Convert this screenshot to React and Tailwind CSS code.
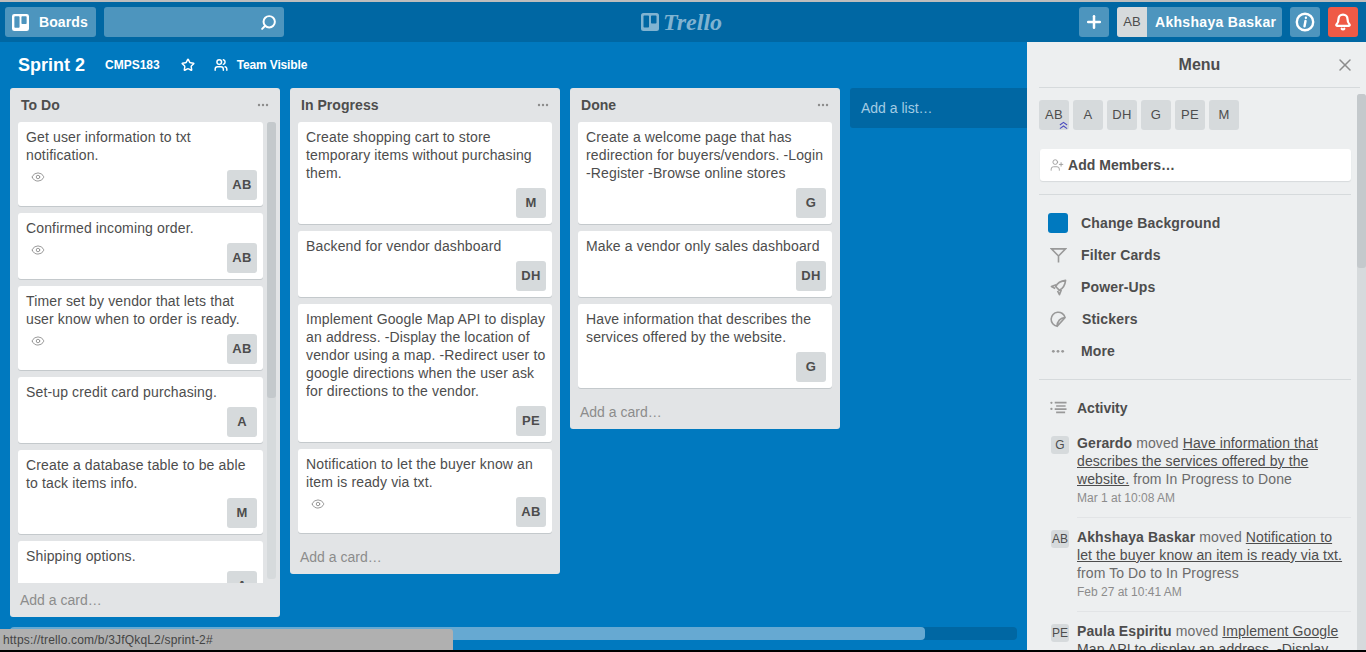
import React from 'react';
import { Bell, Eye, Plus, Search, Star, UserPlus, Users, X } from 'lucide-react';

const todo = [
  { text: 'Get user information to txt notification.', member: 'AB', eye: true },
  { text: 'Confirmed incoming order.', member: 'AB', eye: true },
  { text: 'Timer set by vendor that lets that user know when to order is ready.', member: 'AB', eye: true },
  { text: 'Set-up credit card purchasing.', member: 'A' },
  { text: 'Create a database table to be able to tack items info.', member: 'M' },
  { text: 'Shipping options.', member: 'A' },
];

const inProgress = [
  { text: 'Create shopping cart to store temporary items without purchasing them.', member: 'M' },
  { text: 'Backend for vendor dashboard', member: 'DH' },
  { text: 'Implement Google Map API to display an address. -Display the location of vendor using a map. -Redirect user to google directions when the user ask for directions to the vendor.', member: 'PE' },
  { text: 'Notification to let the buyer know an item is ready via txt.', member: 'AB', eye: true },
];

const done = [
  { text: 'Create a welcome page that has redirection for buyers/vendors. -Login -Register -Browse online stores', member: 'G' },
  { text: 'Make a vendor only sales dashboard', member: 'DH' },
  { text: 'Have information that describes the services offered by the website.', member: 'G' },
];

const BoardMark = ({ className }) => (
  <svg viewBox="0 0 18 18" className={className} fill="currentColor">
    <path fillRule="evenodd" d="M2.5 0h13A2.5 2.5 0 0 1 18 2.5v13a2.5 2.5 0 0 1-2.5 2.5h-13A2.5 2.5 0 0 1 0 15.500v-13A2.500 2.500 0 0 1 2.500 0zM3.300 2.500a.8.8 0 0 0-.8.8v10.400a.8.8 0 0 0 .8.8h3.900a.8.8 0 0 0 .8-.8V3.300a.8.8 0 0 0-.8-.8zm7.500 0a.8.8 0 0 0-.8.8v6.400a.8.8 0 0 0 .8.8h3.900a.8.800 0 0 0 .8-.8V3.300a.8.8 0 0 0-.8-.8z" />
  </svg>
);

const Dots = ({ className }) => (
  <svg viewBox="0 0 12 4" className={className} fill="currentColor">
    <circle cx="2" cy="2" r="1.200" />
    <circle cx="6" cy="2" r="1.200" />
    <circle cx="10" cy="2" r="1.200" />
  </svg>
);

const Card = ({ text, member, eye }) => (
  <div className="mb-[7px] shrink-0 rounded-[3px] bg-white pt-1.5 pr-1.5 pb-1.5 pl-2 shadow-[0_1px_0_#c4c9cc]">
    <p className="text-sm leading-[18px] tracking-[0.14px] text-[#4d4d4d]">{text}</p>
    <div className="mt-1.5 flex items-start justify-between">
      {eye ? <Eye size={14} strokeWidth={1.500} className="ml-[5px] text-[#8c8c8c]" /> : <span />}
      <span className="flex h-[30px] w-[30px] items-center justify-center rounded-[3px] bg-[#d6dadc] text-[13px] font-bold tracking-[0.3px] text-[#4d4d4d]">
        {member}
      </span>
    </div>
  </div>
);

const ListHeader = ({ title }) => (
  <div className="flex h-[34px] items-center justify-between px-[11px]">
    <h2 className="text-sm font-bold tracking-[0.05px] text-[#4d4d4d]">{title}</h2>
    <Dots className="w-[12px] text-[#8c8c8c]" />
  </div>
);

const AddCard = () => <div className="flex h-[34px] items-center pl-2.5 text-sm text-[#8c8c8c]">Add a card…</div>;

const List = ({ title, cards }) => (
  <section className="w-[270px] shrink-0 rounded-[3px] bg-[#e2e4e6]">
    <ListHeader title={title} />
    <div className="flex flex-col px-2">
      {cards.map((c) => (
        <Card key={c.text} {...c} />
      ))}
    </div>
    <AddCard />
  </section>
);

const TodoList = () => (
  <section className="h-[529px] w-[270px] shrink-0 rounded-[3px] bg-[#e2e4e6]">
    <ListHeader title="To Do" />
    <div className="flex h-[461px] pl-2">
      <div className="flex w-[245px] flex-col overflow-hidden">
        {todo.map((c) => (
          <Card key={c.text} {...c} />
        ))}
      </div>
      <div className="ml-1 h-[457px] w-[9px] rounded-[3px] bg-[#d6dadc]">
        <div className="h-[276px] rounded-[3px] bg-[#c4c9cc]" />
      </div>
    </div>
    <AddCard />
  </section>
);

const HeaderButton = ({ className = 'bg-[#4d95be]', children }) => (
  <button className={`flex h-[30px] w-[30px] items-center justify-center rounded-[3px] text-white ${className}`}>{children}</button>
);

const Header = () => (
  <header className="flex h-10 shrink-0 items-center bg-[#0067a3] pr-2 pl-[5px]">
    <div className="flex flex-1 items-center gap-2">
      <button className="flex h-[30px] w-[91px] items-center gap-2.5 rounded-[3px] bg-[#4d95be] pl-[7px] text-sm font-bold tracking-[0.1px] text-white">
        <BoardMark className="h-[17px] w-[17px]" />
        Boards
      </button>
      <div className="flex h-[30px] w-[180px] items-center justify-end rounded-[3px] bg-[#4d95be] pr-[7px] text-white">
        <Search size={17} strokeWidth={2.800} className="-scale-x-100" />
      </div>
    </div>
    <div className="flex items-center gap-1 text-[#80b3d1]">
      <BoardMark className="h-[18px] w-[18px]" />
      <span className="font-['Liberation_Serif',serif] text-2xl leading-none font-bold italic">Trello</span>
    </div>
    <div className="flex flex-1 items-center justify-end gap-2">
      <HeaderButton>
        <Plus size={20} strokeWidth={3} />
      </HeaderButton>
      <button className="flex h-[30px] w-[165px] items-center rounded-[3px] bg-[#4d95be] text-sm font-bold tracking-[0.3px] text-white">
        <span className="flex h-[30px] w-[30px] items-center justify-center rounded-l-[3px] bg-[#d6dadc] text-[13px] font-normal tracking-normal text-[#4d4d4d]">AB</span>
        <span className="pl-2">Akhshaya Baskar</span>
      </button>
      <HeaderButton>
        <svg viewBox="0 0 20 20" className="h-5 w-5" fill="none" stroke="currentColor" strokeWidth="2.400" strokeLinecap="round">
          <circle cx="10" cy="10" r="8.200" />
          <path d="M10.900 5.800v.01M10.500 9l-1 5.200" />
        </svg>
      </HeaderButton>
      <HeaderButton className="bg-[#ef5a46]">
        <Bell size={18} strokeWidth={3} />
      </HeaderButton>
    </div>
  </header>
);

const MenuItem = ({ icon, label, labelClass = '' }) => (
  <div className="flex h-8 items-center">
    <span className="mr-1 flex w-[38px] justify-center text-[#999]">{icon}</span>
    <span className={`text-sm font-bold tracking-[0.15px] text-[#4d4d4d] ${labelClass}`}>{label}</span>
  </div>
);

const Activity = ({ initials, name, before, link, after, date, last }) => (
  <div className="flex pl-3">
    <span className="mt-[2px] flex h-[18px] w-[18px] shrink-0 items-center justify-center rounded-[3px] bg-[#d6dadc] text-xs text-[#4d4d4d]">
      {initials}
    </span>
    <div className={`ml-2 flex-1 pb-2.5 text-sm leading-[18px] tracking-[0.1px] text-[#6b6b6b] ${last ? '' : 'mb-2.5 border-b border-[#e2e4e6]'}`}>
      <p>
        <b className="font-bold text-[#4d4d4d]">{name}</b> {before} <u className="text-[#4d4d4d]">{link}</u> {after}
      </p>
      <p className="mt-[1px] text-xs leading-[18px] tracking-normal text-[#8c8c8c]">{date}</p>
    </div>
  </div>
);

const Sidebar = () => (
  <aside className="flex w-[339px] shrink-0 flex-col bg-[#edeff0]">
    <div className="relative mr-1.5 ml-3 flex h-[46px] shrink-0 items-center justify-center border-b border-[#d6dadc]">
      <h2 className="text-base font-bold text-[#4d4d4d]">Menu</h2>
      <X size={20} strokeWidth={1.800} className="absolute right-[5px] text-[#8c8c8c]" />
    </div>
    <div className="flex min-h-0 flex-1">
      <div className="flex min-w-0 flex-1 flex-col overflow-hidden pr-1.5 pl-3">
        <div className="flex shrink-0 flex-col border-b border-[#d6dadc] pb-[13px]">
          <div className="mt-3 flex gap-1">
            {['AB', 'A', 'DH', 'G', 'PE', 'M'].map((m, i) => (
              <span key={m} className="relative flex h-[30px] w-[30px] items-center justify-center rounded-[3px] bg-[#d6dadc] text-[13px] tracking-[0.3px] text-[#4d4d4d]">
                {m}
                {i === 0 && (
                  <svg viewBox="0 0 10 9" className="absolute right-[1px] bottom-0 h-[9px] w-[9px] text-[#4c4cc0]" fill="none" stroke="currentColor" strokeWidth="1.200">
                    <path d="M1 4l4-3 4 3M1 8l4-3 4 3" />
                  </svg>
                )}
              </span>
            ))}
          </div>
          <button className="mt-[19px] ml-[1px] flex h-8 items-center rounded-[3px] bg-white pl-[10px] text-sm font-bold tracking-[0.05px] text-[#4d4d4d] shadow-[0_1px_1px_#d6dadc]">
            <UserPlus size={14} strokeWidth={1.500} className="mr-1 text-[#999]" />
            Add Members…
          </button>
        </div>
        <nav className="shrink-0 border-b border-[#d6dadc] py-3">
          <MenuItem icon={<span className="h-5 w-5 rounded-[3px] bg-[#0079bf]" />} label="Change Background" />
          <MenuItem
            icon={
              <svg viewBox="0 0 18 18" className="h-[17px] w-[17px]" fill="none" stroke="currentColor" strokeWidth="1.700">
                <path d="M1.500 2h15L9 9.500zM9 9.500V16.500" />
              </svg>
            }
            label="Filter Cards"
          />
          <MenuItem
            icon={
              <svg viewBox="0 0 18 18" className="h-[17px] w-[17px]" fill="none" stroke="currentColor" strokeWidth="1.700" strokeLinejoin="round">
                <path d="M16.500 1.500C12 2 8 4 6 8l4 4c4-2 6-6 6.500-10.500zM6.500 6L1.500 8l4 2M12 11.500L10 16.500l-2-4" />
              </svg>
            }
            label="Power-Ups"
          />
          <MenuItem
            icon={
              <svg viewBox="0 0 18 18" className="h-[17px] w-[17px]" fill="none" stroke="currentColor" strokeWidth="1.700">
                <path d="M16 7A7.500 7.500 0 1 0 7.500 16.200L16 7zM7.500 16.200C7.500 11 11 7 16 7" />
              </svg>
            }
            label="Stickers"
            labelClass="pl-[1px]"
          />
          <MenuItem icon={<Dots className="w-[14px]" />} label="More" />
        </nav>
        <div className="flex h-[55px] shrink-0 items-center pl-[11px]">
          <svg viewBox="0 0 18 16" className="mr-[10px] h-4 w-[17px] text-[#999]" fill="currentColor">
            <circle cx="1.500" cy="2.500" r="1.200" />
            <circle cx="1.500" cy="9" r="1.200" />
            <path d="M5 1.500h12.500v1.800H5zM6.500 5h10v1.800h-10zM5 8.200h12.500V10H5zM6.500 11.800h9.500v1.800H6.500z" />
          </svg>
          <span className="text-sm font-bold text-[#4d4d4d]">Activity</span>
        </div>
        <div className="-mt-px min-h-0">
          <Activity initials="G" name="Gerardo" before="moved" link="Have information that describes the services offered by the website." after="from In Progress to Done" date="Mar 1 at 10:08 AM" />
          <Activity initials="AB" name="Akhshaya Baskar" before="moved" link="Notification to let the buyer know an item is ready via txt." after="from To Do to In Progress" date="Feb 27 at 10:41 AM" />
          <Activity initials="PE" name="Paula Espiritu" before="moved" link="Implement Google Map API to display an address. -Display" after="" date="Feb 27 at 10:20 AM" last />
        </div>
      </div>
      <div className="mt-1.5 w-[9px] shrink-0 rounded-t-[3px] bg-[#d6dadc]">
        <div className="h-[174px] rounded-[3px] bg-[#c4c9cc]" />
      </div>
    </div>
  </aside>
);

const App = () => (
  <div className="relative flex h-[652px] w-[1366px] flex-col overflow-hidden bg-[#0079bf] font-['Liberation_Sans',Arial,sans-serif]">
    <div className="h-[2px] shrink-0 bg-[#bdbdbd]" />
    <Header />
    <main className="flex min-h-0 flex-1">
      <div className="flex min-w-0 flex-1 flex-col">
        <div className="flex h-[46px] shrink-0 items-center pl-[18px] text-white">
          <h1 className="text-lg font-bold">Sprint 2</h1>
          <span className="ml-5 text-xs font-bold">CMPS183</span>
          <Star size={14} strokeWidth={2.500} className="ml-[21px]" />
          <Users size={14} strokeWidth={2.500} className="ml-[19px]" />
          <span className="ml-[9px] text-xs font-bold tracking-[-0.15px]">Team Visible</span>
        </div>
        <div className="flex min-h-0 flex-1 items-start gap-2.5 pl-2.5">
          <TodoList />
          <List title="In Progress" cards={inProgress} />
          <List title="Done" cards={done} />
          <div className="flex h-10 flex-1 items-center rounded-l-[3px] bg-[#0067a3] pl-[11px] text-sm text-[#a3cce3]">Add a list…</div>
        </div>
        <div className="mx-2.5 mb-2.5 h-[13px] w-[1007px] shrink-0 rounded-[4px] bg-[#0067a3]">
          <div className="h-full w-[915px] rounded-[4px] bg-[#66a9d2]" />
        </div>
      </div>
      <Sidebar />
    </main>
    <div className="h-[2px] shrink-0 bg-black" />
    {/* browser link preview over the page */}
    <div className="absolute bottom-[2px] left-0 flex h-[21px] w-[453px] items-center rounded-tr-[3px] bg-[#b0b0b0] pl-[3px] text-xs tracking-[0.18px] text-[#444]">
      https://trello.com/b/3JfQkqL2/sprint-2#
    </div>
  </div>
);

export default App;
